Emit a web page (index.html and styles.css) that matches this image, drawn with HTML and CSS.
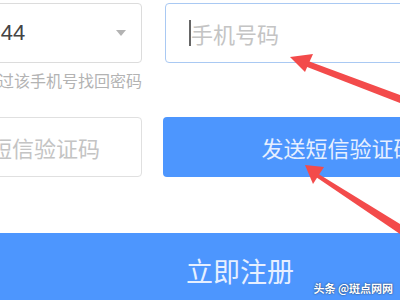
FILE: index.html
```html
<!DOCTYPE html>
<html lang="zh">
<head>
<meta charset="utf-8">
<link rel="stylesheet" href="styles.css">
</head>
<body>
<div class="page">
  <div class="form">
    <div class="row row1">
      <div class="col-left">
        <div class="select"><span class="val">+44</span><span class="caret"></span></div>
        <div class="hint">可通过该手机号找回密码</div>
      </div>
      <div class="field phone"><span class="cursor"></span><span class="ph">手机号码</span></div>
    </div>
    <div class="row row2">
      <div class="field code"><span class="ph">短信验证码</span></div>
      <button class="send">发送短信验证码</button>
    </div>
    <button class="submit">立即注册</button>
  </div>
  <svg class="arrows" width="400" height="300" viewBox="0 0 400 300">
    <polygon points="300,58 302,65 400,103 400,95" fill="#f34b4b"/>
    <polygon points="290,57 313,54 305,72" fill="#f34b4b"/>
    <polygon points="312,170 316,177 400,234 400,224" fill="#f34b4b"/>
    <polygon points="305,165 324,167 313,184" fill="#f34b4b"/>
  </svg>
  <div class="watermark">头条 @斑点网网</div>
</div>
</body>
</html>
```

FILE: styles.css
```css
html, body {
  margin: 0;
  padding: 0;
  background: #fff;
}
body {
  font-family: "Noto Sans CJK SC", "Noto Sans", sans-serif;
}
.page {
  position: relative;
  width: 400px;
  height: 300px;
  overflow: hidden;
}
.form {
  margin-left: -34px;
  width: 552px;
  padding-top: 3px;
}
.row {
  display: flex;
  align-items: flex-start;
}
.row1 {
  gap: 23px;
}
.col-left {
  width: 176px;
  flex: none;
}
.select {
  height: 60px;
  box-sizing: border-box;
  border: 1px solid #dcdcdc;
  border-radius: 4px;
  display: flex;
  align-items: center;
  padding-left: 21px;
  padding-right: 15px;
}
.val {
  flex: 1;
  font-family: "Liberation Sans", sans-serif;
  font-size: 22px;
  color: #444;
}
.caret {
  width: 0;
  height: 0;
  border-left: 5px solid transparent;
  border-right: 5px solid transparent;
  border-top: 6px solid #b3b3b3;
}
.hint {
  margin-top: 7px;
  font-size: 16px;
  line-height: 20px;
  color: #b3b3b3;
  white-space: nowrap;
}
.field {
  height: 60px;
  box-sizing: border-box;
  border: 1px solid #e0e0e0;
  border-radius: 4px;
  display: flex;
  align-items: center;
  padding-left: 23px;
  font-size: 22px;
  color: #c4c4c4;
  white-space: nowrap;
}
.phone {
  flex: 1;
  border-color: #a9c9f3;
}
.cursor {
  width: 2px;
  height: 26px;
  background: #666;
}
.row2 {
  margin-top: 27px;
  gap: 21px;
}
.code {
  width: 176px;
  flex: none;
}
.send {
  flex: 1;
  height: 60px;
  border: 0;
  border-radius: 4px;
  background: #4d96fe;
  color: #e6efff;
  font-family: inherit;
  font-size: 22px;
  padding: 0 4px 0 0;
  text-align: center;
  white-space: nowrap;
}
.submit {
  display: block;
  width: 100%;
  height: 74px;
  margin-top: 56px;
  border: 0;
  border-radius: 4px;
  background: #4d96fe;
  color: #e6efff;
  font-family: inherit;
  font-size: 27px;
  padding: 0 4px 0 0;
}
.arrows {
  position: absolute;
  left: 0;
  top: 0;
  pointer-events: none;
}
.watermark {
  position: absolute;
  right: 7px;
  bottom: 5px;
  font-size: 11px;
  line-height: 14px;
  font-weight: bold;
  color: #fff;
  text-shadow: 0 0 2px rgba(0,0,0,0.7);
  white-space: nowrap;
}
```
